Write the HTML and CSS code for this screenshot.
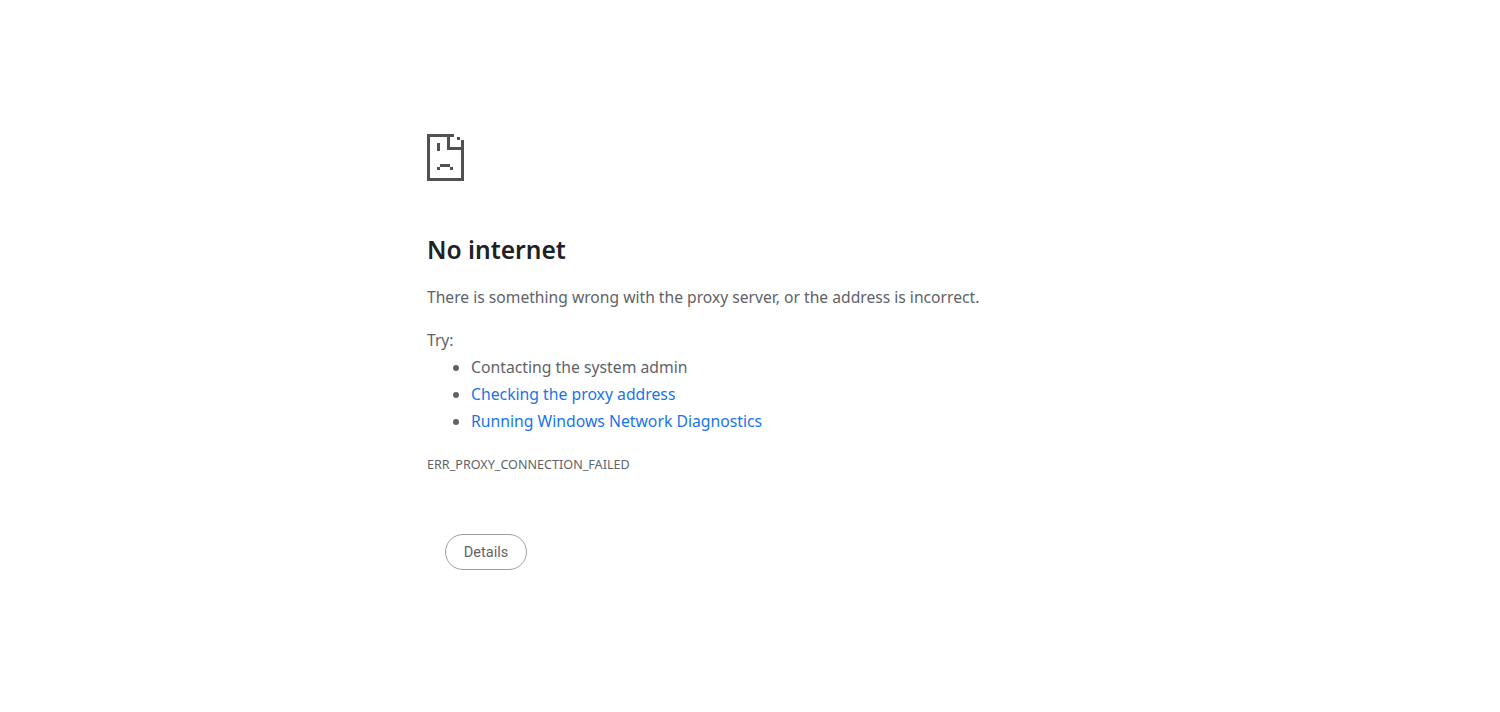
FILE: index.html
```html
<!DOCTYPE html>
<html lang="en">
<head>
<meta charset="utf-8">
<title>No internet</title>
<link rel="stylesheet" href="styles.css">
</head>
<body>
<main class="page">
  <svg class="icon" width="37" height="47" viewBox="0 0 37 47" fill="#515151" aria-hidden="true">
    <path d="M0 0H27V3H3V44H34V6H37V47H0Z"/>
    <path d="M20 3H23V13H34V16H20Z"/>
    <rect x="30" y="3" width="3" height="3"/>
    <rect x="10" y="9" width="3" height="8"/>
    <rect x="13" y="30" width="10" height="3"/>
    <rect x="10" y="33" width="3" height="3"/>
    <rect x="23" y="33" width="3" height="3"/>
  </svg>
  <h1 class="title">No internet</h1>
  <p class="summary">There is something wrong with the proxy server, or the address is incorrect.</p>
  <p class="try">Try:</p>
  <ul class="tips">
    <li>Contacting the system admin</li>
    <li><a href="#">Checking the proxy address</a></li>
    <li><a href="#">Running Windows Network Diagnostics</a></li>
  </ul>
  <p class="code">ERR_PROXY_CONNECTION_FAILED</p>
  <button class="details" type="button">Details</button>
</main>
</body>
</html>
```
FILE: styles.css
```css
html, body {
  margin: 0;
  background: #fff;
}
body {
  font-family: "Noto Sans", "Open Sans", sans-serif;
  color: #5f6368;
}
.page {
  width: 600px;
  margin-left: 427px;
  padding-top: 134px;
}
.icon {
  display: block;
}
.title {
  margin: 52px 0 0;
  font-size: 24.6px;
  line-height: 34px;
  font-weight: 600;
  color: #202124;
}
.summary {
  margin: 17px 0 0;
  font-size: 15.65px;
  line-height: 27px;
}
.try {
  margin: 16px 0 0;
  font-size: 15.65px;
  line-height: 27px;
}
.tips {
  margin: 0;
  padding: 0 0 0 44px;
  font-size: 15.75px;
  line-height: 27px;
}
.tips a {
  color: #1a73e8;
  text-decoration: none;
}
.code {
  margin: 21px 0 0;
  font-size: 12.6px;
  line-height: 18px;
}
.details {
  display: block;
  margin: 60px 0 0 18px;
  width: 82px;
  height: 36px;
  padding: 0;
  background: #fff;
  border: 1px solid #9aa0a6;
  border-radius: 18px;
  font-family: Roboto, sans-serif;
  font-size: 14.5px;
  color: #5f6368;
}
```
